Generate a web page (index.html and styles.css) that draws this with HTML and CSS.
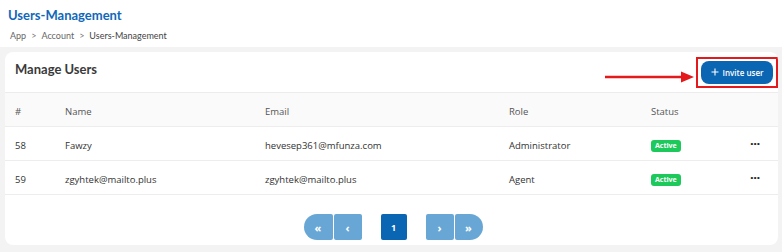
FILE: index.html
```html
<!DOCTYPE html>
<html>
<head>
<meta charset="utf-8">
<link rel="stylesheet" href="styles.css">
</head>
<body>
<header class="page-head">
  <h1 class="page-title">Users-Management</h1>
  <nav class="crumbs">
    <span>App</span><span class="sep">&gt;</span><span>Account</span><span class="sep">&gt;</span><span class="current">Users-Management</span>
  </nav>
</header>
<main class="wrap">
  <section class="card">
    <div class="card-head">
      <h2 class="card-title">Manage Users</h2>
      <div class="invite-area">
        <svg class="arrow" width="90" height="12" viewBox="0 0 90 12"><line x1="0" y1="6" x2="78" y2="6" stroke="#e3191c" stroke-width="2.4"/><polygon points="76,0.5 89,6 76,11.5" fill="#e3191c"/></svg>
        <div class="highlight">
          <button class="invite"><svg width="8" height="8" viewBox="0 0 8 8"><path d="M4 0.5V7.5M0.5 4H7.5" stroke="#fff" stroke-width="1.1"/></svg>Invite user</button>
        </div>
      </div>
    </div>
    <div class="row head-row">
      <div>#</div><div>Name</div><div>Email</div><div>Role</div><div>Status</div><div></div>
    </div>
    <div class="row">
      <div>58</div><div>Fawzy</div><div>hevesep361@mfunza.com</div><div>Administrator</div><div><span class="badge">Active</span></div><div class="dots">&middot;&middot;&middot;</div>
    </div>
    <div class="row">
      <div>59</div><div>zgyhtek@mailto.plus</div><div>zgyhtek@mailto.plus</div><div>Agent</div><div><span class="badge">Active</span></div><div class="dots">&middot;&middot;&middot;</div>
    </div>
    <div class="pager">
      <div class="pgroup">
        <button class="pg first">&laquo;</button><button class="pg last-l">&lsaquo;</button>
      </div>
      <button class="pg current-pg">1</button>
      <div class="pgroup">
        <button class="pg first-r">&rsaquo;</button><button class="pg last">&raquo;</button>
      </div>
    </div>
  </section>
</main>
</body>
</html>
```
FILE: styles.css
```css
* { box-sizing: border-box; }
html, body { margin: 0; padding: 0; }
body {
  background: #fff;
  font-family: "Open Sans", "Noto Sans", sans-serif;
  color: #333;
  width: 782px;
  height: 252px;
  overflow: hidden;
}
.page-head {
  padding: 7px 8px 0 8px;
  height: 47px;
}
.page-title {
  margin: 0;
  font-family: "Lato", "Noto Sans", sans-serif;
  font-size: 13px;
  font-weight: 700;
  color: #1168b8;
  line-height: 16px;
}
.crumbs {
  margin-top: 7px;
  font-family: "Lato", "Noto Sans", sans-serif;
  font-size: 9px;
  line-height: 12px;
  color: #666;
  display: flex;
  gap: 5px;
  padding-left: 2px;
}
.crumbs .current { color: #444; font-weight: 400; }
.crumbs .sep { color: #777; }
.wrap {
  background: #f3f3f3;
  padding: 5px 4px 7px 5px;
  height: 205px;
}
.card {
  background: #fff;
  border-radius: 8px;
  height: 193px;
  overflow: hidden;
}
.card-head {
  height: 41px;
  display: flex;
  align-items: center;
  justify-content: space-between;
  border-bottom: 1px solid #ececec;
  padding-left: 10px;
  padding-right: 0;
}
.card-title {
  margin: 0;
  font-family: "Lato", "Noto Sans", sans-serif;
  font-size: 13px;
  font-weight: 700;
  color: #3a3a3a;
  margin-top: -7px;
}
.invite-area {
  display: flex;
  align-items: center;
  gap: 1px;
  margin-top: 0;
}
.arrow { display: block; margin-top: 10px; }
.highlight {
  border: 2px solid #e3191c;
  padding: 2px 3px 2px 3px;
  display: flex;
}
.invite {
  width: 72px;
  height: 23px;
  border: none;
  border-radius: 8px;
  background: #0a65b2;
  color: #fff;
  font-family: "Open Sans", "Noto Sans", sans-serif;
  font-size: 8px;
  font-weight: 600;
  display: flex;
  align-items: center;
  justify-content: center;
  gap: 4px;
  padding: 0;
}
.row {
  display: grid;
  grid-template-columns: 50px 200px 244px 142px 1fr 33px;
  align-items: center;
  padding-left: 10px;
  padding-top: 3px;
  height: 34px;
  border-bottom: 1px solid #ededed;
  font-size: 9.5px;
  color: #333;
}
.head-row {
  background: #fafafa;
  color: #555;
  height: 34px;
}
.badge {
  display: inline-block;
  background: #1dc95b;
  color: #fff;
  font-size: 7px;
  font-weight: 700;
  line-height: 12px;
  padding: 0 4px;
  border-radius: 3px;
}
.dots {
  font-size: 13px;
  font-weight: 700;
  letter-spacing: -0.5px;
  color: #222;
  padding-left: 5px;
  line-height: 10px;
  margin-top: -4px;
}
.pager {
  display: flex;
  justify-content: center;
  align-items: center;
  gap: 19px;
  padding-top: 19px;
  padding-left: 3px;
}
.pgroup { display: flex; gap: 1px; }
.pg {
  width: 28px;
  height: 26px;
  border: none;
  background: #68a7d5;
  color: #fff;
  font-family: "Open Sans", "Noto Sans", sans-serif;
  font-size: 11px;
  font-weight: 700;
  border-radius: 2px;
  padding: 0;
}
.pg.first { border-radius: 13px 2px 2px 13px; width: 29px; }
.pg.last { border-radius: 2px 13px 13px 2px; width: 28px; }
.pg.current-pg {
  background: #0a65b2;
  width: 26px;
  font-size: 9px;
}
```
